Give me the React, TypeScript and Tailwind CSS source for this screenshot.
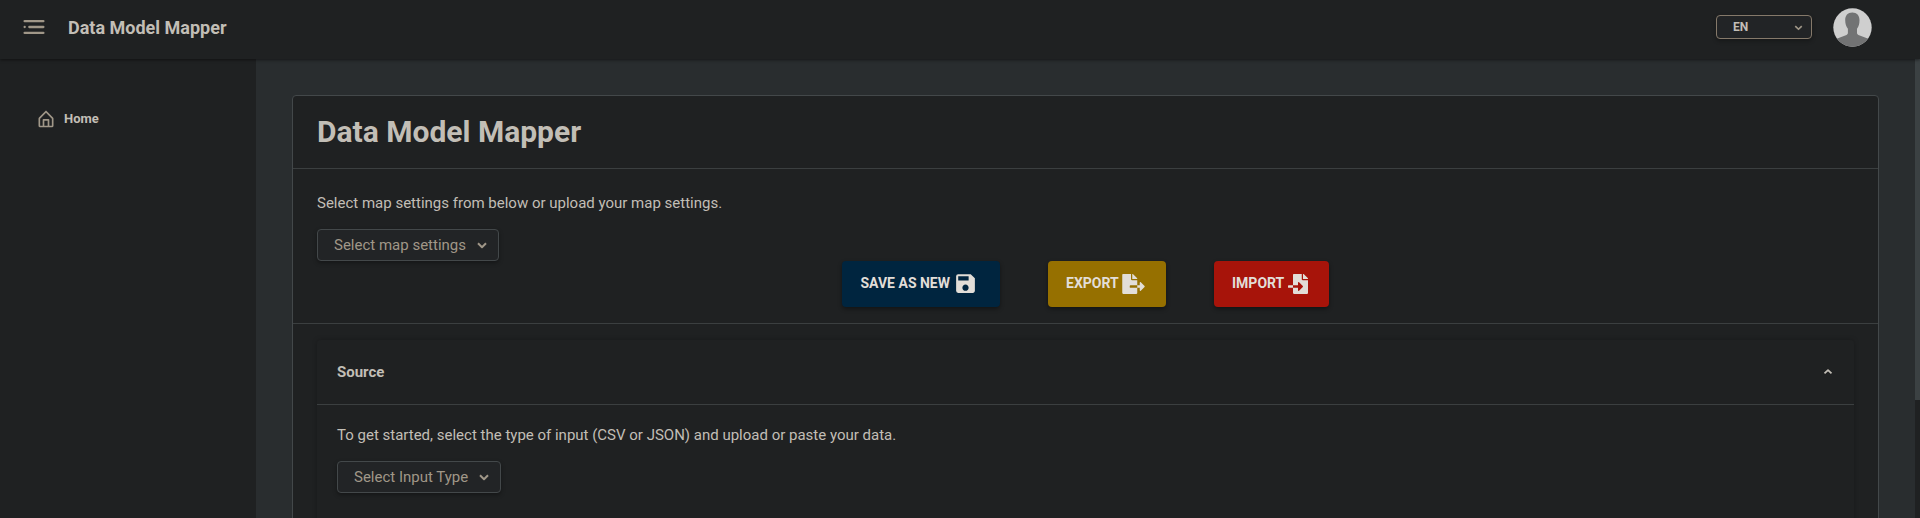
import type { ReactNode } from "react";
import { FaFileExport, FaFileImport } from "react-icons/fa";
import { MdSave } from "react-icons/md";

function Chevron({ up = false, size = 16 }: { up?: boolean; size?: number }) {
  return (
    <svg width={size} height={size} viewBox="0 0 16 16" fill="none" className={up ? "rotate-180" : ""}>
      <path d="M4 6.300L8 10.200L12 6.300" stroke="currentColor" strokeWidth="2" strokeLinejoin="round" />
    </svg>
  );
}

function MenuIcon() {
  return (
    <svg width="28" height="28" viewBox="0 0 24 24" fill="currentColor">
      <circle cx="4" cy="12" r="1" />
      <rect x="7" y="11" width="14" height="2" rx=".94" />
      <rect x="3" y="16" width="18" height="2" rx=".94" />
      <rect x="3" y="6" width="18" height="2" rx=".94" />
    </svg>
  );
}

function HomeIcon() {
  return (
    <svg width="20" height="20" viewBox="0 0 24 24" fill="currentColor">
      <path d="M20.42 10.18L12.71 2.3a1 1 0 0 0-1.42 0l-7.71 7.89A2 2 0 0 0 3 11.62V20a2 2 0 0 0 1.89 2h14.22A2 2 0 0 0 21 20v-8.38a2.07 2.07 0 0 0-.58-1.44zM10 20v-6h4v6zm9 0h-3v-7a1 1 0 0 0-1-1H9a1 1 0 0 0-1 1v7H5v-8.42l7-7.15 7 7.19z" />
    </svg>
  );
}

function Avatar() {
  return (
    <svg width="39" height="39" viewBox="0 0 39 39">
      <defs>
        <clipPath id="avatar-clip">
          <circle cx="19.5" cy="19.5" r="19.2" />
        </clipPath>
      </defs>
      <g clipPath="url(#avatar-clip)">
        <rect width="39" height="39" fill="#cfcfcf" />
        <path
          d="M19.3 4.5c-4.6 0-7.1 3-7.1 7.6 0 4 1 6.6 2.7 8.6v4.4c0 .9-.5 1.4-1.4 1.8L3 31v8h33v-8l-10.600-4.100c-.9-.4-1.400-.9-1.400-1.800v-4.400c1.700-2 2.500-4.600 2.500-8.600 0-4.600-2.600-7.600-7.200-7.600z"
          fill="#727374"
        />
      </g>
    </svg>
  );
}

function SelectButton({ label, width }: { label: string; width: string }) {
  return (
    <button
      className={`${width} flex h-8 items-center justify-between rounded border border-[#43484a] bg-[#222426] pr-2 pl-4 text-[15px] leading-6 text-[#a09788] shadow-[0_2px_4px_rgba(0,0,0,0.35)]`}
    >
      <span className="whitespace-nowrap">{label}</span>
      <Chevron />
    </button>
  );
}

function ActionButton({ label, tone, icon }: { label: string; tone: string; icon: ReactNode }) {
  return (
    <button
      className={`${tone} flex h-[46px] items-center rounded text-sm font-bold whitespace-nowrap text-[#e2ded8] shadow-[0_2px_4px_rgba(0,0,0,0.4)]`}
    >
      <span className="pb-0.5">{label}</span>
      {icon}
    </button>
  );
}

export default function App() {
  return (
    <div className="flex h-[518px] flex-col overflow-hidden bg-[#292d2f] font-[Roboto,sans-serif] text-[15px] text-[#c2beb6]">
      <header className="z-10 flex h-[59px] shrink-0 items-center justify-between bg-[#1f2122] pb-[5px] shadow-[0_1px_3px_rgba(0,0,0,0.5)]">
        <div className="flex items-center pl-5">
          <span className="text-[#a09788]">
            <MenuIcon />
          </span>
          <h1 className="ml-5 pt-px text-lg leading-6 font-bold">Data Model Mapper</h1>
        </div>
        <div className="flex items-center pr-12">
          <button className="flex h-6 w-24 items-center justify-between rounded border border-[#85796a] bg-[#222426] pr-[6px] pl-4 text-xs font-bold shadow-[0_2px_4px_rgba(0,0,0,0.3)]">
            EN
            <span className="text-[#a09788]">
              <Chevron size={13} />
            </span>
          </button>
          <div className="ml-[21px]">
            <Avatar />
          </div>
        </div>
      </header>

      <div className="flex min-h-0 flex-1">
        <nav className="w-64 shrink-0 bg-[#1f2122] pt-[50px] pl-9">
          <a className="flex items-center gap-2 text-[13px] leading-5 font-bold">
            <span className="text-[#a09788]">
              <HomeIcon />
            </span>
            Home
          </a>
        </nav>

        <main className="min-w-0 flex-1 overflow-hidden pt-9 pr-[36px] pl-9">
          <section className="h-[520px] rounded border border-[#43484a] bg-[#1f2122]">
            <div className="h-[73px] border-b border-[#3b3f40] px-6 pt-4">
              <h2 className="text-[30px] leading-10 font-bold">Data Model Mapper</h2>
            </div>

            <div className="h-[155px] border-b border-[#3b3f40] px-6 pt-6">
              <p className="mb-4 leading-5">Select map settings from below or upload your map settings.</p>
              <SelectButton label="Select map settings" width="w-[182px]" />
              <div className="flex justify-center gap-12">
                <ActionButton
                  label="SAVE AS NEW"
                  tone="w-[158px] bg-[#00253f] pl-[18.5px]"
                  icon={<MdSave className="mb-0.5 ml-[3px] size-[25px]" />}
                />
                <ActionButton
                  label="EXPORT"
                  tone="w-[118px] bg-[#967000] pl-[18px]"
                  icon={<FaFileExport className="ml-[3px] h-5 w-[23px]" />}
                />
                <ActionButton
                  label="IMPORT"
                  tone="w-[115px] bg-[#a7140a] pl-[18px]"
                  icon={<FaFileImport className="ml-1 size-5" />}
                />
              </div>
            </div>

            <div className="px-6 pt-4">
              <div className="h-[200px] rounded shadow-[0_0_5px_rgba(0,0,0,0.25)]">
                <div className="flex h-[65px] items-center justify-between border-b border-[#3b3f40] pr-[19px] pl-5">
                  <h3 className="font-bold">Source</h3>
                  <Chevron up size={14} />
                </div>
                <div className="px-5 pt-5">
                  <p className="mb-4 leading-5">
                    To get started, select the type of input (CSV or JSON) and upload or paste your data.
                  </p>
                  <SelectButton label="Select Input Type" width="w-[164px]" />
                </div>
              </div>
            </div>
          </section>
        </main>

        <div className="w-[5px] shrink-0 bg-[#1f2122]">
          <div className="h-[341px] bg-[#3b4143]" />
        </div>
      </div>
    </div>
  );
}
